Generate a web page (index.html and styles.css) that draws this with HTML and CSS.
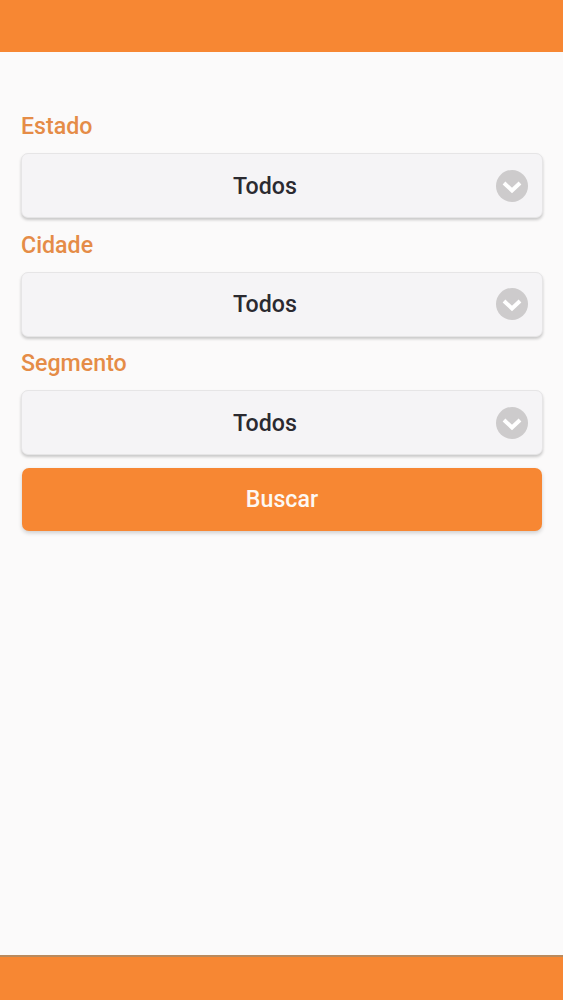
FILE: index.html
```html
<!DOCTYPE html>
<html lang="pt">

<head>
    <meta charset="UTF-8">
    <meta name="viewport" content="width=device-width, initial-scale=1.0">
    <title>Buscar</title>
    <link rel="stylesheet" href="styles.css">
</head>

<body>
    <div class="head"></div>
    <div class="content">
        <div class="label">Estado</div>
        <div class="select">
            <span class="select-text">Todos</span>
            <svg class="arrow" viewBox="0 0 32 32"><circle cx="16" cy="16" r="16" fill="#cdcbcc"/><path d="M8 13l8 7.5 8-7.5" fill="none" stroke="#fff" stroke-width="4"/></svg>
        </div>
        <div class="label">Cidade</div>
        <div class="select">
            <span class="select-text">Todos</span>
            <svg class="arrow" viewBox="0 0 32 32"><circle cx="16" cy="16" r="16" fill="#cdcbcc"/><path d="M8 13l8 7.5 8-7.5" fill="none" stroke="#fff" stroke-width="4"/></svg>
        </div>
        <div class="label">Segmento</div>
        <div class="select">
            <span class="select-text">Todos</span>
            <svg class="arrow" viewBox="0 0 32 32"><circle cx="16" cy="16" r="16" fill="#cdcbcc"/><path d="M8 13l8 7.5 8-7.5" fill="none" stroke="#fff" stroke-width="4"/></svg>
        </div>
        <div class="btn">Buscar</div>
    </div>
    <div class="foot"></div>
</body>

</html>
```

FILE: styles.css
```css
* {
    margin: 0;
    padding: 0;
    box-sizing: border-box;
}

body {
    height: 1000px;
    display: flex;
    flex-direction: column;
    background: #fbfafa;
    font-family: Roboto, "Liberation Sans", sans-serif;
    overflow: hidden;
}

.head {
    height: 52px;
    background: #f78733;
}

.content {
    flex: 1;
    padding: 58px 20px 0 21px;
}

.label {
    height: 43px;
    line-height: 33px;
    font-size: 23.2px;
    font-weight: 500;
    color: #e58c47;
}

.select {
    height: 65px;
    margin-bottom: 10.5px;
    display: flex;
    align-items: center;
    justify-content: flex-end;
    position: relative;
    background: #f5f4f6;
    border: 1px solid #e6e5e6;
    border-radius: 7px;
    box-shadow: 0 2px 3px rgba(0, 0, 0, 0.2);
}

.select:nth-child(6) {
    margin-bottom: 13px;
}

.select-text {
    position: absolute;
    left: 211px;
    font-size: 23.2px;
    font-weight: 500;
    color: #2b2a30;
}

.arrow {
    width: 32px;
    height: 32px;
    margin-right: 14px;
}

.btn {
    height: 63px;
    margin: 0 1px;
    line-height: 62px;
    text-align: center;
    font-size: 23.2px;
    font-weight: 500;
    color: #fdf8f3;
    background: #f78733;
    border-radius: 7px;
    box-shadow: 0 2px 4px rgba(0, 0, 0, 0.18);
}

.foot {
    height: 45px;
    background: #f78733;
    border-top: 2px solid #b98a5e;
}
```
